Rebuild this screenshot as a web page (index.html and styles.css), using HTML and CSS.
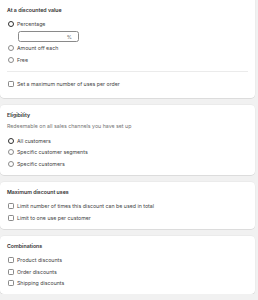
FILE: index.html
```html
<!DOCTYPE html>
<html>
<head>
<meta charset="utf-8">
<link rel="stylesheet" href="styles.css">
</head>
<body>
<div class="page">
  <section class="card card-first">
    <h2 class="title">At a discounted value</h2>
    <div class="choices">
      <label class="choice"><span class="radio checked"></span>Percentage</label>
      <div class="field"><span class="suffix">%</span></div>
      <label class="choice"><span class="radio"></span>Amount off each</label>
      <label class="choice"><span class="radio"></span>Free</label>
    </div>
    <hr class="divider">
    <label class="choice"><span class="checkbox"></span>Set a maximum number of uses per order</label>
  </section>

  <section class="card">
    <h2 class="title">Eligibility</h2>
    <p class="subtitle">Redeemable on all sales channels you have set up</p>
    <div class="choices">
      <label class="choice"><span class="radio checked"></span>All customers</label>
      <label class="choice"><span class="radio"></span>Specific customer segments</label>
      <label class="choice"><span class="radio"></span>Specific customers</label>
    </div>
  </section>

  <section class="card">
    <h2 class="title">Maximum discount uses</h2>
    <div class="choices">
      <label class="choice"><span class="checkbox"></span>Limit number of times this discount can be used in total</label>
      <label class="choice"><span class="checkbox"></span>Limit to one use per customer</label>
    </div>
  </section>

  <section class="card">
    <h2 class="title">Combinations</h2>
    <div class="choices">
      <label class="choice"><span class="checkbox"></span>Product discounts</label>
      <label class="choice"><span class="checkbox"></span>Order discounts</label>
      <label class="choice"><span class="checkbox"></span>Shipping discounts</label>
    </div>
  </section>
</div>
</body>
</html>
```

FILE: styles.css
```css
* { box-sizing: border-box; }
html, body {
  margin: 0;
  padding: 0;
  background: #f1f1f1;
  font-family: Inter, "Noto Sans", sans-serif;
  color: #444444;
  font-size: 5.25px;
  line-height: 8px;
}
html {
  height: 300px;
  overflow: hidden;
}
.page {
  width: 255px;
  display: flex;
  flex-direction: column;
  gap: 7px;
}
.card {
  background: #ffffff;
  border-radius: 4px;
  padding: 6.5px 7px 7px;
  box-shadow: 0 0.6px 0 rgba(0,0,0,0.13), 0 0 0 0.4px rgba(0,0,0,0.05);
}
.card-first {
  border-top-left-radius: 0;
  border-top-right-radius: 0;
  padding-top: 6px;
  padding-bottom: 9.5px;
}
.title {
  margin: 0 0 6px;
  font-size: 5.25px;
  line-height: 8px;
  font-weight: 600;
  color: #303030;
}
.subtitle {
  margin: -3px 0 6.5px;
  color: #747474;
}
.choices {
  display: flex;
  flex-direction: column;
  gap: 3.5px;
}
.choice {
  display: flex;
  align-items: center;
  gap: 3px;
  height: 8px;
  padding-left: 1px;
  white-space: nowrap;
}
.radio {
  width: 6px;
  height: 6px;
  border-radius: 50%;
  border: 0.8px solid #8a8a8a;
  flex: none;
  background: #fff;
}
.radio.checked {
  border: 1.9px solid #303030;
  background: #fff;
}
.checkbox {
  width: 6px;
  height: 6px;
  border-radius: 1.2px;
  border: 0.8px solid #8a8a8a;
  flex: none;
  background: #fff;
}
.field {
  margin: -0.5px 0 -1.5px 11px;
  width: 61px;
  height: 11px;
  border: 0.6px solid #8a8a8a;
  border-radius: 2.5px;
  display: flex;
  align-items: center;
  justify-content: flex-end;
  padding-right: 6px;
  color: #616161;
}
.divider {
  border: 0;
  border-top: 0.8px solid #ebebeb;
  margin: 7px 0 8.5px;
}
```
